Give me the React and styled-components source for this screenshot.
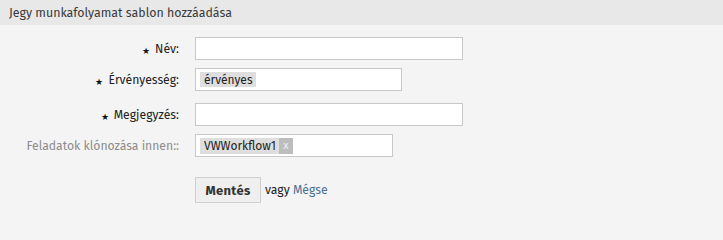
import React from "react";
import styled, { createGlobalStyle } from "styled-components";

const Global = createGlobalStyle`
  html, body { margin: 0; padding: 0; background: #f4f4f4; }
  body { font-family: "Fira Sans", Roboto, "Liberation Sans", sans-serif; font-size: 12.2px; color: #333; }
`;

const Page = styled.div`
  width: 723px;
  height: 215px;
  background: #f4f4f4;
`;

const Header = styled.div`
  height: 25px;
  background: #e8e8e8;
  display: flex;
  align-items: center;
  padding-left: 9px;
  font-size: 12.4px;
  color: #3a3a3a;
`;

const Form = styled.div`
  display: grid;
  grid-template-columns: 179px 1fr;
  column-gap: 16px;
  padding-top: 12px;
`;

const Label = styled.div`
  display: flex;
  align-items: center;
  justify-content: flex-end;
  height: 23px;
  margin-bottom: ${(p) => p.$mb}px;
  color: ${(p) => (p.$muted ? "#8c8c8c" : "#222")};
  white-space: nowrap;
`;

const Star = styled.span`
  font-size: 9px;
  margin-right: 5px;
  margin-top: 4px;
  color: #111;
`;

const Field = styled.div`
  height: 23px;
  margin-bottom: ${(p) => p.$mb}px;
`;

const Input = styled.div`
  box-sizing: border-box;
  width: ${(p) => p.$w}px;
  height: 23px;
  background: #fff;
  border: 1px solid #c8c8c8;
  display: flex;
  align-items: center;
  padding-left: 4px;
`;

const Tag = styled.span`
  background: #dedede;
  color: #222;
  font-size: 12px;
  height: ${(p) => p.$h}px;
  display: inline-flex;
  align-items: center;
  padding: 0 3px 0 4px;
`;

const TagX = styled.span`
  background: #bdbdbd;
  color: #eee;
  font-size: 11px;
  height: 16px;
  width: 14px;
  display: inline-flex;
  align-items: center;
  justify-content: center;
`;

const Actions = styled.div`
  grid-column: 2;
  display: flex;
  align-items: center;
  gap: 4px;
  margin-top: 20px;
  color: #222;
`;

const Button = styled.button`
  box-sizing: border-box;
  height: 26px;
  width: 66px;
  background: #efefef;
  border: 1px solid #cfcfcf;
  font-family: inherit;
  font-weight: bold;
  font-size: 13px;
  color: #333;
  padding: 0;
  letter-spacing: 0.3px;
`;

const Link = styled.a`
  color: #4a7194;
  text-decoration: none;
`;

export default function App() {
  return (
    <Page>
      <Global />
      <Header>Jegy munkafolyamat sablon hozzáadása</Header>
      <Form>
        <Label $mb={8}><Star>★</Star>Név:</Label>
        <Field $mb={8}><Input $w={268} /></Field>

        <Label $mb={12}><Star>★</Star>Érvényesség:</Label>
        <Field $mb={12}>
          <Input $w={207}><Tag $h={15}>érvényes</Tag></Input>
        </Field>

        <Label $mb={8}><Star>★</Star>Megjegyzés:</Label>
        <Field $mb={8}><Input $w={268} /></Field>

        <Label $muted $mb={0}>Feladatok klónozása innen::</Label>
        <Field $mb={0}>
          <Input $w={198}>
            <Tag $h={16}>VWWorkflow1</Tag>
            <TagX>x</TagX>
          </Input>
        </Field>

        <Actions>
          <Button>Mentés</Button>
          <span>vagy <Link href="#">Mégse</Link></span>
        </Actions>
      </Form>
    </Page>
  );
}
